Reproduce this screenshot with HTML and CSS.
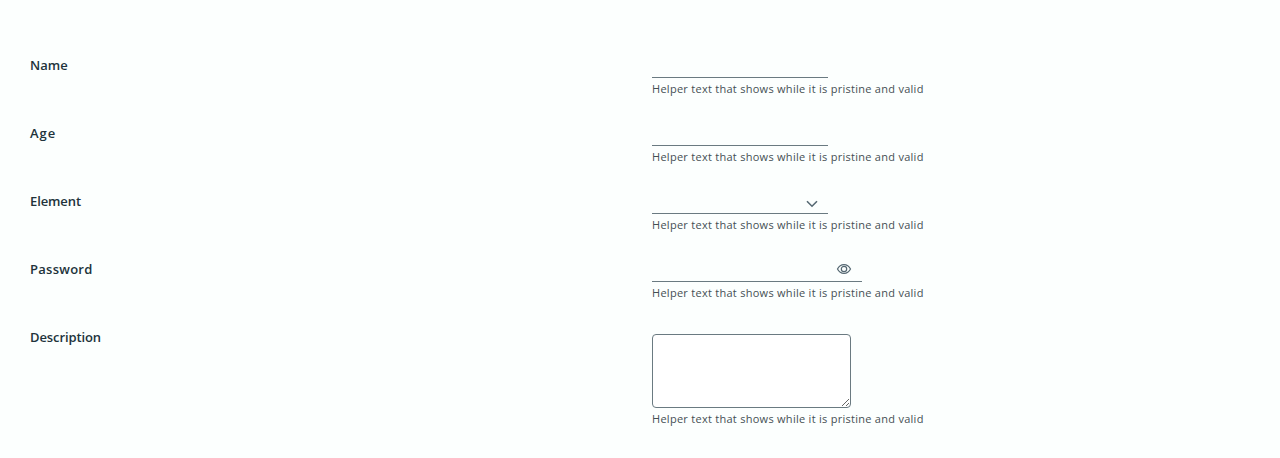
FILE: index.html
```html
<!DOCTYPE html>
<html lang="en">
<head>
<meta charset="utf-8">
<title>Form</title>
<link rel="stylesheet" href="styles.css">
</head>
<body>
<form class="form">
  <div class="row">
    <label class="label" for="name">Name</label>
    <div class="control">
      <input class="input" id="name" type="text">
      <span class="helper">Helper text that shows while it is pristine and valid</span>
    </div>
  </div>
  <div class="row">
    <label class="label label-age" for="age">Age</label>
    <div class="control">
      <input class="input" id="age" type="text">
      <span class="helper">Helper text that shows while it is pristine and valid</span>
    </div>
  </div>
  <div class="row">
    <label class="label label-element" for="element">Element</label>
    <div class="control">
      <div class="input select" id="element">
        <svg class="chevron" width="12" height="8" viewBox="0 0 12 8"><path d="M1 1.2 6 6.2 11 1.2"/></svg>
      </div>
      <span class="helper">Helper text that shows while it is pristine and valid</span>
    </div>
  </div>
  <div class="row">
    <label class="label label-password" for="password">Password</label>
    <div class="control">
      <div class="input password" id="password">
        <svg class="eye" width="16" height="12" viewBox="0 0 16 12"><path d="M1.5 6C4.4 .2 11.6 .2 14.5 6C11.6 11.8 4.4 11.8 1.5 6Z"/><circle cx="8" cy="6" r="2.7"/></svg>
      </div>
      <span class="helper">Helper text that shows while it is pristine and valid</span>
    </div>
  </div>
  <div class="row">
    <label class="label label-description" for="description">Description</label>
    <div class="control">
      <textarea class="textarea" id="description"></textarea>
      <span class="helper">Helper text that shows while it is pristine and valid</span>
    </div>
  </div>
</form>
</body>
</html>
```
FILE: styles.css
```css
* { box-sizing: border-box; }
body {
  margin: 0;
  background: #fcfffe;
  color: #21333b;
  font-family: Metropolis, "Open Sans", sans-serif;
}
.form {
  display: flex;
  flex-direction: column;
  gap: 24px;
  padding: 54px 30px 0;
}
.row { display: grid; grid-template-columns: 622px 1fr; }
.label { font-size: 13px; font-weight: 600; line-height: 22px; }
.label-age { letter-spacing: 1px; }
.label-element { letter-spacing: -.1px; }
.label-password { letter-spacing: .27px; }
.label-description { letter-spacing: -.1px; }
.control { display: flex; flex-direction: column; align-items: flex-start; }
.input {
  width: 176px;
  height: 24px;
  padding: 0 6px;
  border: 0;
  border-bottom: 1px solid #6a7a81;
  border-radius: 0;
  background: none;
  outline: none;
}
.select { display: flex; justify-content: flex-end; align-items: center; padding: 4px 10px 0 0; }
.password { display: flex; justify-content: flex-end; align-items: center; width: 210px; padding: 0 10px 2px 0; }
.chevron, .eye { fill: none; stroke: #566973; stroke-width: 1.6; }
.eye { stroke-width: 1.2; }
.helper { font-size: 11px; line-height: 16px; margin-top: 3px; padding-bottom: 1px; letter-spacing: .275px; color: #454f54; white-space: nowrap; }
.textarea {
  display: block;
  width: 199px;
  height: 74px;
  margin-top: 8px;
  border: 1px solid #6a7a81;
  border-radius: 4px;
  background: #fff;
  outline: none;
}
```
